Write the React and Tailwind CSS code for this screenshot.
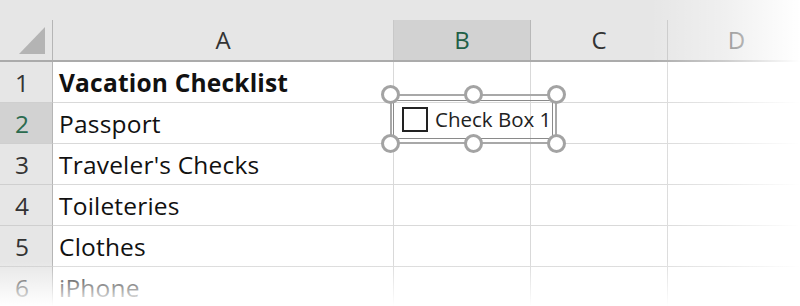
import React from "react";

const rows = [
  { n: "1", t: "Vacation Checklist", bold: true },
  { n: "2", t: "Passport", sel: true },
  { n: "3", t: "Traveler's Checks" },
  { n: "4", t: "Toileteries" },
  { n: "5", t: "Clothes" },
  { n: "6", t: "iPhone" },
];

function Handle({ className }) {
  return (
    <div
      className={`absolute w-[19px] h-[19px] rounded-full border-[3px] border-[#a3a3a3] bg-white ${className}`}
    />
  );
}

export default function App() {
  return (
    <div
      className="relative w-[800px] h-[306px] overflow-hidden bg-white"
      style={{ fontFamily: '"Open Sans", "Noto Sans", sans-serif' }}
    >
      <div className="h-[20px] bg-[#e6e6e6]" />
      <div className="flex h-[42px] bg-[#e6e6e6] border-b-2 border-[#ababab]">
        <div className="w-[53px] shrink-0 border-r border-[#b5b5b5] flex items-end justify-end pr-[7px] pb-[6px]">
          <svg width="26" height="27" viewBox="0 0 26 27">
            <polygon points="0,27 26,27 26,0" fill="#b4b4b4" />
          </svg>
        </div>
        <div className="w-[341px] shrink-0 border-r border-[#c8c8c8] flex items-center justify-center text-[24px] text-[#333]">
          A
        </div>
        <div className="w-[137px] shrink-0 border-r border-[#b8b8b8] bg-[#d2d2d2] flex items-center justify-center text-[24px] text-[#1f5f47]">
          B
        </div>
        <div className="w-[137px] shrink-0 border-r border-[#c8c8c8] flex items-center justify-center text-[24px] text-[#333]">
          C
        </div>
        <div className="w-[137px] shrink-0 flex items-center justify-center text-[24px] text-[#555]">
          D
        </div>
      </div>
      {rows.map((r) => (
        <div key={r.n} className="flex h-[41px]">
          <div
            className={`w-[53px] shrink-0 border-r border-[#b5b5b5] border-b border-b-[#cfcfcf] flex items-center justify-center pr-[8px] pt-[3px] text-[24.5px] leading-none ${
              r.sel ? "bg-[#d2d2d2] text-[#2b6b4f]" : "bg-[#e6e6e6] text-[#333]"
            }`}
          >
            {r.n}
          </div>
          <div
            className={`w-[341px] shrink-0 border-r border-b border-[#d9d9d9] flex items-center pl-[6px] pt-[3px] text-[24.5px] leading-none tracking-[0.2px] text-[#111] ${
              r.bold ? "font-bold" : ""
            }`}
          >
            {r.t}
          </div>
          <div className="w-[137px] shrink-0 border-r border-b border-[#d9d9d9]" />
          <div className="w-[137px] shrink-0 border-r border-b border-[#d9d9d9]" />
          <div className="w-[137px] shrink-0 border-b border-[#d9d9d9]" />
        </div>
      ))}

      {/* Check box form control with selection handles */}
      <div className="absolute left-[390px] top-[94px] w-[167px] h-[50px] border-2 border-[#a8a8a8]">
        <div className="absolute left-[1px] top-[4px] right-[2px] bottom-[3px] border border-[#8a8a8a] flex items-center overflow-visible">
          <div className="ml-[8px] w-[26px] h-[25px] shrink-0 border-2 border-[#222] bg-white" />
          <div className="ml-[7px] text-[20.5px] text-[#222] leading-none pb-[1px] whitespace-nowrap">
            Check Box 1
          </div>
        </div>
        <Handle className="left-[-11px] top-[-11px]" />
        <Handle className="left-[72px] top-[-11px]" />
        <Handle className="right-[-11px] top-[-11px]" />
        <Handle className="left-[-11px] bottom-[-11px]" />
        <Handle className="left-[72px] bottom-[-11px]" />
        <Handle className="right-[-11px] bottom-[-11px]" />
      </div>

      {/* fades */}
      <div className="absolute right-0 top-0 h-full w-[150px] bg-gradient-to-r from-transparent via-white/40 to-white" />
      <div className="absolute left-0 bottom-0 w-full h-[45px] bg-gradient-to-b from-transparent via-white/50 to-white" />
    </div>
  );
}
